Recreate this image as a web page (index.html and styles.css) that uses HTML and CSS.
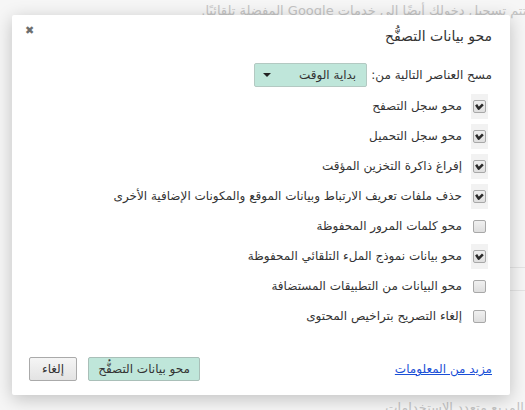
FILE: index.html
```html
<!DOCTYPE html>
<html lang="ar" dir="rtl">
<head>
    <meta charset="UTF-8">
    <title>محو بيانات التصفُّح</title>
    <link rel="stylesheet" href="styles.css">
</head>
<body>
    <div class="page">
        <p class="bg-line top">كمبيوتر، ستتم تسجيل دخولك أيضًا إلى خدمات Google المفضلة تلقائيًا.</p>
        <p class="bg-line side">من ال</p>
        <div class="bg-field"></div>
        <p class="bg-line bottom">في المربع متعدد الاستخدامات</p>
    </div>

    <div class="overlay">
        <div class="dialog">
            <span class="close">&#x2716;</span>
            <h1 class="title">محو بيانات التصفُّح</h1>

            <div class="range">
                <label>مسح العناصر التالية من:</label>
                <div class="select">
                    <span>بداية الوقت</span>
                    <span class="arrow"></span>
                </div>
            </div>

            <ul class="items">
                <li><span class="box on"><span class="check"><svg viewBox="0 0 13 13"><path d="M2.5 4.5 L5.5 9 L10.5 4"/></svg></span></span>محو سجل التصفح</li>
                <li><span class="box on"><span class="check"><svg viewBox="0 0 13 13"><path d="M2.5 4.5 L5.5 9 L10.5 4"/></svg></span></span>محو سجل التحميل</li>
                <li><span class="box on"><span class="check"><svg viewBox="0 0 13 13"><path d="M2.5 4.5 L5.5 9 L10.5 4"/></svg></span></span>إفراغ ذاكرة التخزين المؤقت</li>
                <li><span class="box on"><span class="check"><svg viewBox="0 0 13 13"><path d="M2.5 4.5 L5.5 9 L10.5 4"/></svg></span></span>حذف ملفات تعريف الارتباط وبيانات الموقع والمكونات الإضافية الأخرى</li>
                <li><span class="box"><span class="check"></span></span>محو كلمات المرور المحفوظة</li>
                <li><span class="box on"><span class="check"><svg viewBox="0 0 13 13"><path d="M2.5 4.5 L5.5 9 L10.5 4"/></svg></span></span>محو بيانات نموذج الملء التلقائي المحفوظة</li>
                <li><span class="box"><span class="check"></span></span>محو البيانات من التطبيقات المستضافة</li>
                <li><span class="box"><span class="check"></span></span>إلغاء التصريح بتراخيص المحتوى</li>
            </ul>

            <div class="footer">
                <a href="#" class="more">مزيد من المعلومات</a>
                <button class="btn primary">محو بيانات التصفُّح</button>
                <button class="btn">إلغاء</button>
            </div>
        </div>
    </div>
</body>
</html>
```

FILE: styles.css
```css
body {
    margin: 0;
    background: #f6f6f6;
    font-family: "DejaVu Sans", sans-serif;
    color: #333;
    overflow: hidden;
}
.page {
    height: 410px;
    display: flex;
    flex-direction: column;
    margin-right: -60px;
}
.bg-line {
    margin: 0;
    font-size: 13px;
    color: #c4c4c4;
    white-space: nowrap;
}
.bg-line.top {
    padding-top: 3px;
}
.bg-line.side {
    margin-top: 176px;
    color: #d8d0e6;
}
.bg-field {
    margin-top: 58px;
    width: 120px;
    height: 22px;
    border: 1px solid #e4e4e4;
}
.bg-line.bottom {
    margin-top: auto;
    margin-bottom: -5px;
    margin-right: 40px;
}

/* modal */
.overlay {
    position: absolute;
    left: 12px;
    top: 15px;
}
.dialog {
    position: relative;
    box-sizing: border-box;
    width: 498px;
    height: 380px;
    background: #fff;
    border-radius: 2px;
    box-shadow: 0 4px 18px rgba(0, 0, 0, 0.22);
    padding: 11px 18px 14px 17px;
    display: flex;
    flex-direction: column;
}
.close {
    position: absolute;
    left: 13px;
    top: 9px;
    font-size: 11px;
    font-weight: bold;
    color: #6e6e6e;
}
.title {
    margin: 0;
    font-size: 14px;
    font-weight: normal;
    line-height: 20px;
}
.range {
    margin-top: 17px;
    display: flex;
    align-items: center;
    gap: 4px;
    font-size: 12px;
    height: 24px;
}
.select {
    box-sizing: border-box;
    width: 113px;
    height: 24px;
    background: #bfe6da;
    border: 1px solid #b3c9c2;
    border-radius: 2px;
    display: flex;
    align-items: center;
    justify-content: space-between;
    padding: 0 10px 0 8px;
}
.arrow {
    border-top: 4px solid #222;
    border-left: 4px solid transparent;
    border-right: 4px solid transparent;
}
.items {
    list-style: none;
    margin: 4px 0 0;
    padding: 0 4px 0 0;
    font-size: 12px;
}
.items li {
    height: 30px;
    display: flex;
    align-items: center;
    gap: 9px;
}
.box {
    width: 17px;
    height: 25px;
    display: flex;
    align-items: center;
    justify-content: center;
}
.box.on {
    background: #f2f2f2;
}
.check {
    box-sizing: border-box;
    width: 13px;
    height: 13px;
    border: 1px solid #a8a8a8;
    border-radius: 2px;
    background: linear-gradient(#f0f0f0, #dedede);
    display: flex;
}
.check svg {
    width: 11px;
    height: 11px;
    fill: none;
    stroke: #2a2a2a;
    stroke-width: 3;
    stroke-linejoin: round;
}
.footer {
    margin-top: auto;
    display: flex;
    align-items: center;
    gap: 11px;
}
.more {
    margin-left: auto;
    font-size: 12px;
    color: #1a4fd6;
}
.btn {
    height: 24px;
    padding: 0 12px;
    font-family: "DejaVu Sans", sans-serif;
    font-size: 12px;
    color: #333;
    white-space: nowrap;
    background: linear-gradient(#f5f5f5, #e3e3e3);
    border: 1px solid #aaa;
    border-radius: 2px;
}
.btn.primary {
    width: 112px;
    padding: 0 4px;
    background: #bfe6da;
    border-color: #a9bfb8;
}
```
